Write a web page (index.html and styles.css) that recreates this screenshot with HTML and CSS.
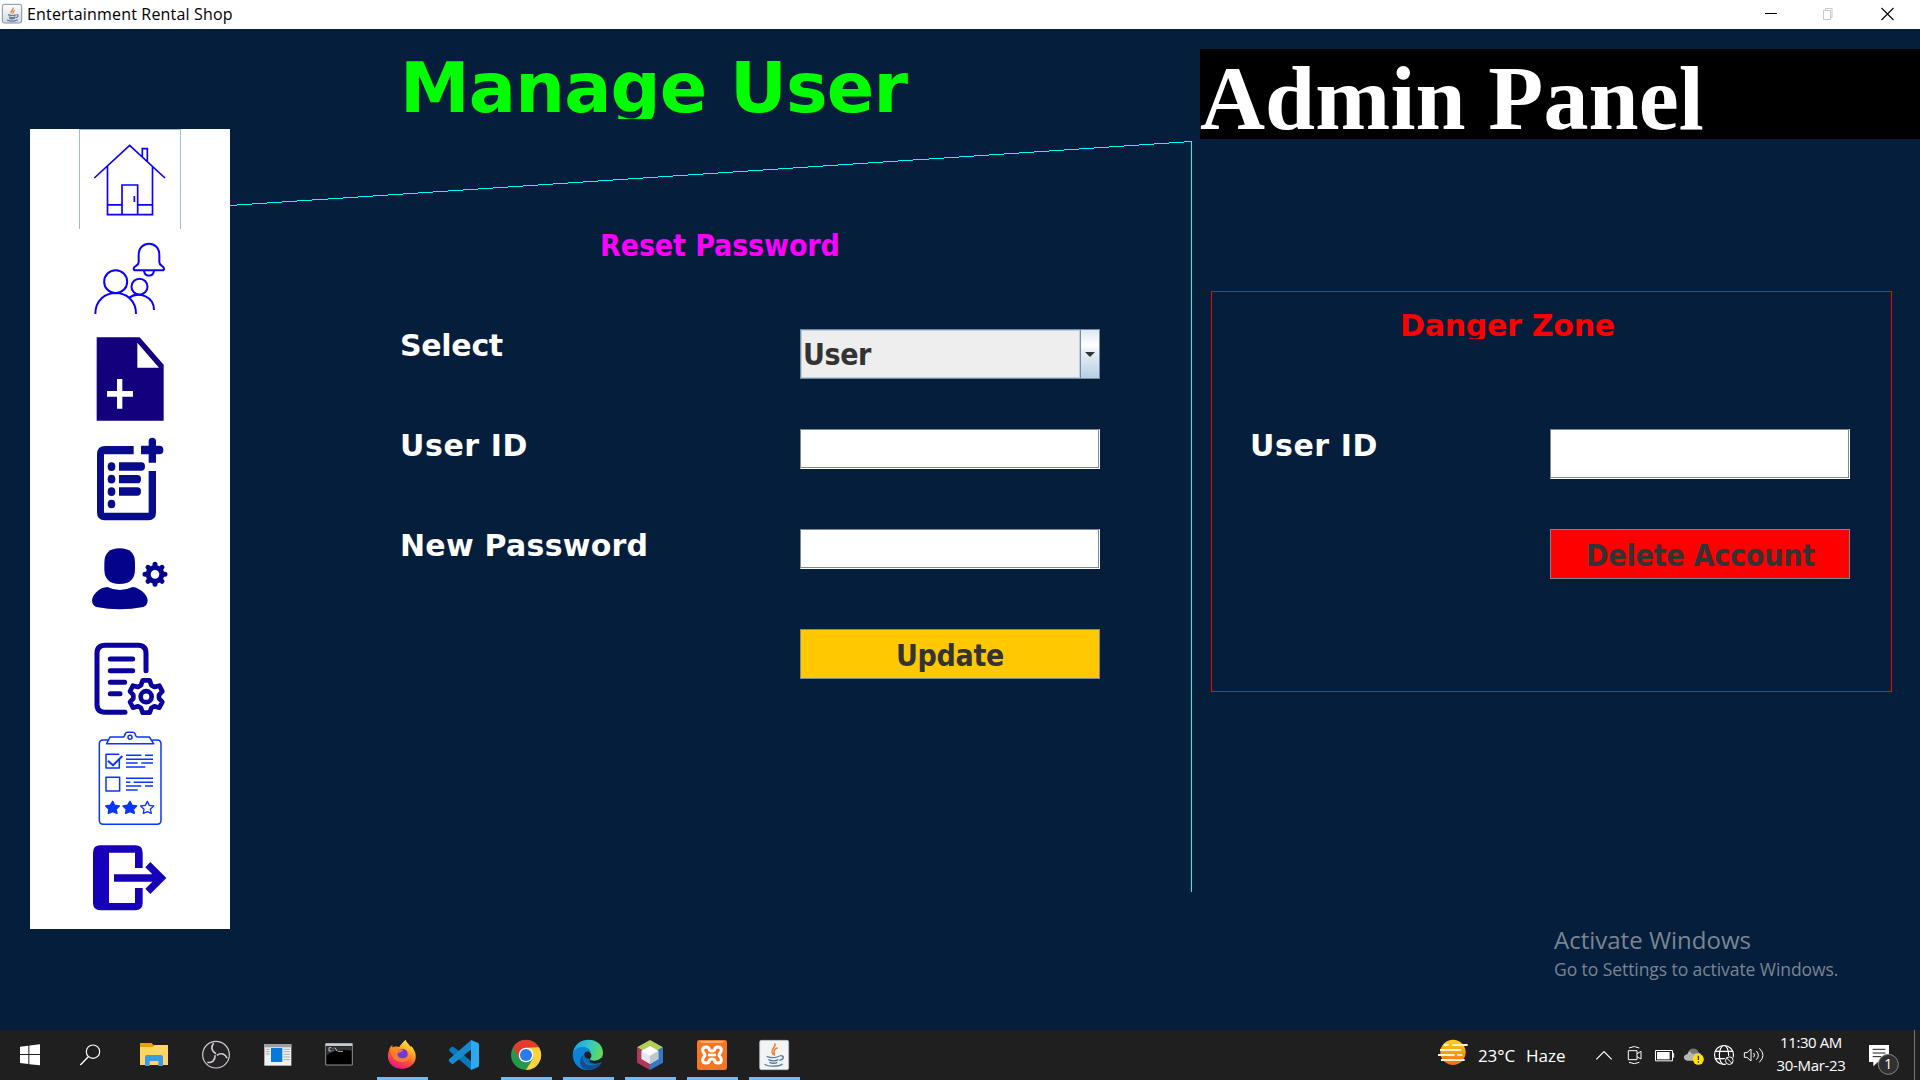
FILE: index.html
```html
<!DOCTYPE html>
<html lang="en">
<head>
<meta charset="utf-8">
<title>Entertainment Rental Shop</title>
<link rel="stylesheet" href="styles.css">
</head>
<body>
<header class="titlebar">
  <svg class="app-icon" viewBox="0 0 66 66">
    <defs><linearGradient id="javaBg" x1="0" y1="0" x2="0" y2="1"><stop offset="0" stop-color="#fdfdfd"/><stop offset="1" stop-color="#d5d9dd"/></linearGradient></defs>
    <rect x="4" y="4" width="58" height="56" rx="6" fill="url(#javaBg)" stroke="#7b93a8" stroke-width="3"/>
    <path d="M36 14c4 6-9 8-5 17M41 22c-7 4-5 7-5 10" fill="none" stroke="#e8833a" stroke-width="4"/>
    <path d="M21 35c8 3 18 3 25 0M24 41c6 3 14 3 19 0M25 46c6 2 12 2 17 0M18 51c10 4 24 4 32-1M47 35c7 0 5 8-3 9" fill="none" stroke="#5c7d9c" stroke-width="3.500"/>
  </svg>
  <span class="titlebar-text">Entertainment Rental Shop</span>
  <div class="window-controls">
    <svg viewBox="0 0 58 29"><path d="M23 13.500h12" stroke="#000"/></svg>
    <svg viewBox="0 0 58 29"><path d="M23.500 10.500h7v9h-7zM25.500 10v-1.500h6.500v9h-1.500" fill="none" stroke="#c9c9c9"/></svg>
    <svg viewBox="0 0 58 29"><path d="M23.500 8l12 12M35.500 8l-12 12" stroke="#000" stroke-width="1.100"/></svg>
  </div>
</header>

<main class="workspace">
  <nav class="sidebar">
    <button class="nav-item nav-home" aria-label="Home">
      <svg viewBox="180 27 300 300" fill="none" stroke="#0a00ff" stroke-width="5">
        <path d="M223 171L329 73l106 98M262.500 136v145h135V136M262 251.500h44M353 251.500h44M306 281v-89h47v89M343 225v18M367 107V83h15v38"/>
      </svg>
    </button>
    <button class="nav-item" aria-label="User alerts">
      <svg viewBox="180 327 300 300" fill="none" stroke="#0a00ff" stroke-width="6">
        <circle cx="287" cy="485" r="34.500"/><path d="M226 582c0-84 122-84 122 0M328 533c27-20 74-4 74 37"/>
        <circle cx="358.500" cy="500" r="24"/>
        <path d="M356 405c0-45 62-45 62 0v22c0 11 14 10 14 19 0 3-2 5-5 5h-80c-4 0-6-3-6-5 0-9 15-8 15-19zM372 452c2 20 28 20 30 0"/>
      </svg>
    </button>
    <button class="nav-item" aria-label="Add file">
      <svg viewBox="180 627 300 300" fill="#13007c">
        <path d="M230 652h129l72 82v168H230z"/><path d="M352 668v75h65zM291 777h16v36h32v17h-32v36h-16v-36h-30v-17h30z" fill="#fff"/>
      </svg>
    </button>
    <button class="nav-item" aria-label="Add list">
      <svg viewBox="180 927 300 300" fill="#080c8c">
        <path d="M341 978v25h-89v175h134V1053h22v124q0 24-23 24H254q-23 0-23-24V1003q0-25 25-25z"/>
        <path d="M386 977v-13q0-11 11-11t11 11v13h10q12 0 12 13t-12 13h-10v25h-22v-25h-23v-26zM297 1027h67q11 0 11 12.500t-11 12.500h-67zM297 1065h55q11 0 11 12.500t-11 12.500h-55zM297 1102h55q11 0 11 12.500t-11 12.500h-55z"/>
        <ellipse cx="274.500" cy="1040" rx="11.500" ry="13"/><ellipse cx="274.500" cy="1077.500" rx="11.500" ry="13"/><ellipse cx="274.500" cy="1115" rx="11.500" ry="13"/><ellipse cx="274.500" cy="1152" rx="11.500" ry="13"/>
      </svg>
    </button>
    <button class="nav-item" aria-label="Manage user">
      <svg viewBox="180 27 300 300" fill="#03038c">
        <path d="M253 129q0-44 46-44t46 44v18q0 45-46 45t-46-45z"/>
        <path d="M262 201q37 18 76 0c23 2 45 25 45 40 0 11-5 17-13 20q-71 14-141 0c-8-3-13-9-13-20 2-19 23-39 46-40z"/>
        <circle cx="405" cy="163" r="20.500" fill="none" stroke="#03038c" stroke-width="15"/>
        <path fill="none" stroke="#03038c" stroke-width="15" stroke-linecap="round" d="M405 133v3M405 190v3M375 163h3M432 163h3M384 142l2 2M424 182l2 2M426 142l-2 2M386 182l-2 2"/>
      </svg>
    </button>
    <button class="nav-item" aria-label="Manage records">
      <svg viewBox="180 327 300 300" fill="none" stroke="#0a009c" stroke-width="15" stroke-linecap="round" stroke-linejoin="round">
        <path d="M378 452v-52q0-24-24-24h-98q-25 0-25 24v153q0 24 25 24h59M271 417h67M271 452h67M271 487h43M271 521h29"/>
        <circle cx="378.500" cy="530" r="16.500" stroke-width="14"/>
        <path stroke-width="14" d="M368 481h21l5 15 9 5 15-4 9 17-10 11v10l10 11-9 17-15-4-9 5-5 14h-21l-5-14-9-5-15 4-9-17 10-11v-10l-10-11 9-17 15 4 9-5z"/>
      </svg>
    </button>
    <button class="nav-item" aria-label="Reviews">
      <svg viewBox="180 627 300 300" fill="none" stroke="#0a35ff" stroke-width="4.500" stroke-linejoin="round">
        <path d="M264 660h-14q-12 0-12 12v229q0 12 12 12h161q12 0 12-12V672q0-12-12-12h-14M260 671l10-20h38q5 0 8-10 2-4 6-4h16q4 0 7 4 2 10 8 10h35l13 20z"/>
        <circle cx="330" cy="652" r="6"/>
        <path d="M298 718v26h-40v-41h40M258 772h41v41h-41z"/><path d="M264 722l15 14 28-28" stroke-width="6"/>
        <path d="M318 706h46M375 706h24M318 718h81M318 729h35M364 729h35M318 741h58M318 775h81M318 787h13M341 787h58M318 798h46M375 798h24M318 810h35"/>
        <path fill="#0a35ff" d="M278 844l6 12 14 2-10 10 3 12-13-5-13 5 2-12-10-10 14-2zM330 844l6 12 14 2-10 10 3 12-13-5-13 5 2-12-10-10 14-2z"/>
        <path stroke-width="4" d="M382 844l6 12 13 2-10 10 3 12-12-5-12 5 2-12-10-10 14-2z"/>
      </svg>
    </button>
    <button class="nav-item" aria-label="Log out">
      <svg viewBox="180 927 300 300" fill="#1600b8">
        <path d="M241 976h105q22 0 22 22v46h-23v-46h-78v151h78v-45h23v45q0 22-22 22H241q-22 0-22-22V998q0-22 22-22z"/>
        <path d="M282 1063h115l-21-21 15-16 48 48-48 48-15-16 21-21H282z"/>
      </svg>
    </button>
  </nav>

  <section class="reset-section">
    <svg class="divider-line" viewBox="0 0 962 752"><path d="M0 64.500L961.500 0.500V751" fill="none" stroke="#00ffff" shape-rendering="crispEdges"/></svg>
    <h1 class="page-title">Manage User</h1>
    <h2 class="reset-title">Reset Password</h2>
    <div class="form-grid reset-form">
      <label class="field-label label-select">Select</label>
      <div class="combo"><span class="combo-value">User</span><span class="combo-arrow"><svg viewBox="0 0 10 5"><path d="M0 0h10L5 5z" fill="#333"/></svg></span></div>
      <label class="field-label label-id" for="uid">User ID</label>
      <input class="text-field" id="uid">
      <label class="field-label label-password" for="pwd">New Password</label>
      <input class="text-field" id="pwd" type="password">
      <button class="action update">Update</button>
    </div>
  </section>

  <section class="admin-section">
    <h2 class="admin-banner">Admin Panel</h2>
    <div class="danger-zone">
      <h3 class="danger-title">Danger Zone</h3>
      <div class="form-grid danger-form">
        <label class="field-label label-id" for="did">User ID</label>
        <input class="text-field tall" id="did">
        <button class="action delete">Delete Account</button>
      </div>
    </div>
    <div class="watermark">
      <p class="watermark-title">Activate Windows</p>
      <p class="watermark-text">Go to Settings to activate Windows.</p>
    </div>
  </section>
</main>

<footer class="taskbar">
  <div class="start"><svg viewBox="0 30 180 150"><path fill="#fff" d="M60 80l25-3v25H60zM88 76.500l32-3.500v29H88zM60 105h25v27l-25-3zM88 105h32v31l-32-3.500z"/></svg></div>
  <div class="search"><svg viewBox="180 30 189 150"><circle cx="279" cy="95" r="20" fill="none" stroke="#fff" stroke-width="3.500"/><path d="M265 110l-24 25" stroke="#fff" stroke-width="4"/></svg></div>
  <div class="app"><svg viewBox="369 30 186 150"><path d="M420 69h35l6 7h42v59h-83z" fill="#e8a200"/><path d="M420 81h38l6-6h40v60h-84z" fill="#ffd567"/><path d="M435 138v-27q0-6 6-6h42q6 0 6 6v27h-14v-15h-26v15z" fill="#3f9be0"/></svg></div>
  <div class="app"><svg viewBox="555 30 186 150"><circle cx="648" cy="104" r="40" fill="#252326" stroke="#d0d0d0" stroke-width="3.500"/><g fill="none" stroke="#d0d0d0" stroke-width="5"><path d="M648 101c-14-8-16-20-7-31"/><path d="M648 101c-14-8-16-20-7-31" transform="rotate(120 648 104)"/><path d="M648 101c-14-8-16-20-7-31" transform="rotate(240 648 104)"/></g></svg></div>
  <div class="app"><svg viewBox="741 30 186 150"><path d="M793 72h81v65h-81z" fill="#f1f1f1"/><path d="M793 72h81v10h-81z" fill="#9a9ea3"/><path d="M813 84h34v42h-34z" fill="#0a78d6"/><path d="M797 88h12M797 95h12M797 102h12M850 88h20M850 95h20M850 103h20M850 111h20M850 119h20" stroke="#aaa" stroke-width="3"/></svg></div>
  <div class="app"><svg viewBox="927 30 186 150"><path d="M977 71h80v64h-80z" fill="#000" stroke="#8d9299" stroke-width="3"/><path d="M979 79v28q25-22 77-15V79z" fill="#333"/><path d="M977 70h80v8h-80z" fill="#c3cbd2"/><path d="M994 83h-7v10h7M999 84v2M999 91v2M1005 83l7 11M1014 94h15" fill="none" stroke="#ddd" stroke-width="2.500"/></svg></div>
  <div class="app running"><svg viewBox="3 30 186 150">
    <defs><linearGradient id="fox" x1=".8" y1="0" x2=".3" y2="1"><stop offset="0" stop-color="#fff04b"/><stop offset=".35" stop-color="#ffae22"/><stop offset=".65" stop-color="#ff5038"/><stop offset="1" stop-color="#e7147f"/></linearGradient></defs>
    <path d="M57 91c2-8 5-13 10-16v8c7-4 14-5 21-2 5-9 11-15 19-22 3 10 11 13 14 21 3-2 5 0 5 0 26 35 4 66-31 66-35 0-48-29-38-55z" fill="url(#fox)"/><circle cx="97" cy="103" r="17" fill="#7139db"/><path d="M61 84c12-4 20-7 28 3l11 2c-3 8-13 9-17 10-2 10 5 17 16 15 12 0 18-9 11-19 19 13 5 31-13 31-25 0-37-20-36-42z" fill="#ff8a22" opacity=".8"/></svg></div>
  <div class="app"><svg viewBox="189 30 186 150"><path d="M303 61v88l-64-55q-4-4 0-8l6-5q3-2 7 1l51 39z" fill="#0878be"/><path d="M303 61v29l-53 41q-4 2-7-1l-5-5q-4-4 0-8z" fill="#1689cf"/><path d="M303 60l20 8q4 2 4 6v62q0 4-4 6l-20 8z" fill="#29aaf4"/><path d="M303 89v34l-21-17z" fill="#1f1f1f"/></svg></div>
  <div class="app running"><svg viewBox="375 30 186 150"><circle cx="468" cy="105" r="45" fill="#24984b"/><path d="M429 82a45 45 0 0 1 78 0l-39 1-20 33z" fill="#e33b2e"/><path d="M507 82a45 45 0 0 1-39 68l20-33-20-34z" fill="#ffd13d"/><circle cx="468" cy="105" r="22" fill="#fff"/><circle cx="468" cy="105" r="18" fill="#287bea"/></svg></div>
  <div class="app running"><svg viewBox="561 30 186 150">
    <defs><linearGradient id="edge" x1="0" y1=".3" x2="1" y2=".5"><stop offset="0" stop-color="#219ddd"/><stop offset=".5" stop-color="#31c6cc"/><stop offset="1" stop-color="#62dd50"/></linearGradient></defs>
    <circle cx="653" cy="105" r="45" fill="#0e68b8"/><path d="M659 127q24 10 42-5v-8h-42z" fill="#1f1f1f"/><path d="M609 105c0-60 90-60 90-6 0 24-34 28-40 18 13-14-5-33-25-29-13 2-21 9-25 17z" fill="url(#edge)"/><path d="M609 104c0-26 47-32 54-7-20-11-30 15-16 29 12 11 28 11 45 1-9 14-22 23-39 23-25 0-44-20-44-46z" fill="#0b83d8"/><path d="M641 104c-10 23 17 42 48 25l7-2c-8 17-28 24-43 23-27-4-29-34-12-46z" fill="#114f91"/><path d="M659 117c-15 0-18-10-14-20 15-10 26 11 14 20z" fill="#1f1f1f"/></svg></div>
  <div class="app running"><svg viewBox="747 30 186 150"><path d="M840 60l39 22-39 23-39-23z" fill="#b1cf57"/><path d="M801 82l39 23v45l-39-22z" fill="#b23857"/><path d="M879 82l-39 23v45l39-22z" fill="#3579c4"/><path d="M840 79l25 14v24l-25 15-26-15V93z" fill="#e4e7eb"/><path d="M840 79l25 14-25 14-26-14z" fill="#fff"/><path d="M840 107l25-14v24l-25 15z" fill="#bfc7ce"/></svg></div>
  <div class="app running"><svg viewBox="933 30 186 150"><rect x="981" y="60" width="90" height="90" rx="7" fill="#f37622"/><path d="M990 63h72q-1 6-8 6h-56q-7 0-8-6z" fill="#f8ad79"/><path d="M1018 90c0-12-20-12-20 0 0 7 6 10 7 15-1 5-7 8-7 15 0 12 20 12 20 0q8-6 16 0c0 12 20 12 20 0 0-7-6-10-7-15 1-5 7-8 7-15 0-12-20-12-20 0q-8 6-16 0z" fill="none" stroke="#fff" stroke-width="9" stroke-linejoin="round"/><path d="M1014 105h24" stroke="#fff" stroke-width="8"/></svg></div>
  <div class="app running"><svg viewBox="1119 30 186 150"><rect x="1169" y="61" width="87" height="88" rx="5" fill="#f2f4f5" stroke="#b9c3cb" stroke-width="2"/><path d="M1214 70c8 12-18 16-4 34M1223 83c-17 9-9 12-10 24" fill="none" stroke="#ef7b28" stroke-width="4.500"/><path d="M1190 109c13 5 29 4 39-1M1195 119c9 4 22 4 30 0M1198 127c7 3 18 3 24 0M1184 132c5 9 46 8 53 0M1230 107c15-1 12 11-2 14" fill="none" stroke="#557a9c" stroke-width="4"/></svg></div>

  <div class="tray">
    <div class="weather">
      <svg viewBox="102 30 114 150"><defs><linearGradient id="sun" x1="0" y1="0" x2="0" y2="1"><stop offset="0" stop-color="#ffd21c"/><stop offset="1" stop-color="#f56a0c"/></linearGradient></defs><circle cx="159" cy="97" r="38" fill="url(#sun)"/><path d="M131 75h15M156 75h47M120 90h64M114 105h50M172 105h15M123 120h71" stroke="#fff1d0" stroke-width="5.500"/></svg>
      <span class="temperature">23°C</span><span class="condition">Haze</span>
    </div>
    <svg class="tray-icon w30" viewBox="570 30 90 150"><path d="M589 118l23-23 23 23" fill="none" stroke="#fff" stroke-width="3.500"/></svg>
    <svg class="tray-icon w29" viewBox="660 30 87 150"><path d="M685 92h26v27h-26zM711 101l12-7v23l-12-7M687 84q16-9 31 0M687 127q16 8 31 0" fill="none" stroke="#fff" stroke-width="3"/></svg>
    <svg class="tray-icon w31" viewBox="747 30 93 150"><path d="M766.500 91.500h51v31h-51zM818 100h3v12h-3" fill="none" stroke="#fff" stroke-width="3"/><path d="M771 96h38v22h-38z" fill="#fff"/></svg>
    <svg class="tray-icon w29" viewBox="840 30 87 150"><path d="M861 122c-14-2-11-19 1-19 5-18 27-22 34-5 12 1 13 24 0 24z" fill="#b6b6b6"/><path d="M867 92c8-11 25-8 29 6l-18 4z" fill="#777"/><circle cx="895" cy="118" r="16.500" fill="#ffe100"/><path d="M895 107v13M895 124v4" stroke="#222" stroke-width="3.500"/></svg>
    <svg class="tray-icon w31" viewBox="927 30 93 150"><g fill="none" stroke="#fff" stroke-width="3.500"><circle cx="972" cy="105" r="28.500"/><ellipse cx="972" cy="105" rx="14" ry="28.500"/><path d="M945 94h54M945 116h54"/></g><circle cx="988" cy="122" r="15" fill="#1f1f1f"/><circle cx="988" cy="122" r="11.500" fill="none" stroke="#fff" stroke-width="3"/><path d="M980 114l16 16" stroke="#fff" stroke-width="3"/></svg>
    <svg class="tray-icon w30" viewBox="1020 30 90 150"><path d="M1033 98h8l12-11v36l-12-11h-8zM1061 99q5 6 0 13M1069 93q12 13 0 26M1078 85q22 21 0 42" fill="none" stroke="#fff" stroke-width="3"/></svg>
    <div class="clock"><span class="time">11:30 AM</span><span class="date">30-Mar-23</span></div>
    <svg class="tray-icon w61" viewBox="1359 30 183 150"><path d="M1407 75h60v51h-33l-14 13v-13h-13z" fill="#fff"/><path d="M1418 88h38M1418 99h38M1418 110h26" stroke="#1f1f1f" stroke-width="3"/><circle cx="1465" cy="133" r="30" fill="#303030" stroke="#858585" stroke-width="3"/><text class="badge-count" x="1465" y="148" text-anchor="middle">1</text></svg>
  </div>
</footer>
</body>
</html>
```
FILE: styles.css
```css
* { box-sizing: border-box; }

body {
  margin: 0;
  width: 1920px;
  height: 1080px;
  overflow: hidden;
  display: flex;
  flex-direction: column;
  background: #051e3c;
  color: #fff;
  font-family: "Open Sans", "Noto Sans", sans-serif;
}

h1, h2, h3, p { margin: 0; white-space: nowrap; }
button, input { margin: 0; font: inherit; border-radius: 0; }
svg { display: block; }

/* Window title bar */
.titlebar {
  height: 29px;
  flex: none;
  display: flex;
  align-items: center;
  background: #fff;
  color: #000;
}
.app-icon { width: 22px; height: 22px; margin: 0 4px 2px 1px; }
.titlebar-text { font-size: 16px; line-height: 29px; letter-spacing: 0.18px; }
.window-controls { margin-left: auto; display: flex; margin-right: 4px; }
.window-controls svg { width: 58px; height: 29px; }

/* Application area */
.workspace {
  height: 1001px;
  flex: none;
  display: flex;
  align-items: flex-start;
  font-family: "DejaVu Sans", sans-serif;
  font-weight: 700;
}

.sidebar {
  width: 200px;
  height: 800px;
  margin: 100px 0 0 30px;
  display: flex;
  flex-direction: column;
  align-items: center;
  background: #fff;
}
.nav-item {
  width: 102px;
  height: 100px;
  padding: 0;
  border: 0;
  background: none;
  display: flex;
  justify-content: center;
}
.nav-item svg { width: 100px; height: 100px; flex: none; }
.nav-home { border: 1px solid #a3b8cc; border-bottom: 0; }
.nav-home svg { margin-top: 0; }

.reset-section {
  width: 962px;
  height: 1001px;
  padding: 20px 0 0 170px;
  position: relative;
}
.divider-line {
  position: absolute;
  left: 0;
  top: 112px;
  width: 962px;
  height: 752px;
}
.page-title {
  height: 70px;
  padding-top: 4px;
  overflow: hidden;
  font-size: 70px;
  line-height: 70px;
  letter-spacing: -0.85px;
  color: #0f0;
}
.reset-title {
  margin: 110px 0 67px 200px;
  font: 700 30px/33px "DejaVu Sans Condensed", "DejaVu Sans", sans-serif;
  font-stretch: condensed;
  letter-spacing: -0.1px;
  color: #f0f;
}

.form-grid {
  display: grid;
  grid-auto-rows: 100px;
  align-items: start;
}
.reset-form { grid-template-columns: 400px 300px; }
.danger-form { grid-template-columns: 300px 300px; padding-left: 38px; }

.field-label { font-size: 30px; line-height: 33px; white-space: nowrap; }
.label-select { letter-spacing: -0.3px; }
.label-id { letter-spacing: 0.6px; }
.label-password { letter-spacing: 0.25px; }

.text-field {
  width: 300px;
  height: 40px;
  padding: 0 4px;
  background: #fff;
  border: 1px solid;
  border-color: #7a8a99 #fff #fff #7a8a99;
  box-shadow: inset -1px -1px #7a8a99;
}
.text-field.tall { height: 50px; }

.combo {
  height: 50px;
  display: flex;
  border: 1px solid #7a8a99;
  background: #eee;
  color: #333;
  font-family: "DejaVu Sans Condensed", "DejaVu Sans", sans-serif;
  font-stretch: condensed;
  font-size: 30px;
  line-height: 48px;
}
.combo-value {
  flex: 1;
  padding-left: 1px;
  line-height: 47px;
  letter-spacing: -0.4px;
  border: 1px solid #b8cfe5;
}
.combo-arrow {
  width: 19px;
  border-left: 1px solid #7a8a99;
  background: linear-gradient(#dde8f3, #fff 32%, #e8eff7 45%, #b8cfe5);
  display: flex;
  align-items: center;
  justify-content: center;
}
.combo-arrow svg { width: 10px; height: 5px; }

.action {
  grid-column: 2;
  height: 50px;
  padding: 3px 0 0;
  border: 1px solid #7a8a99;
  color: #333;
  font-family: "DejaVu Sans Condensed", "DejaVu Sans", sans-serif;
  font-stretch: condensed;
  font-size: 30px;
  line-height: 44px;
}
.update { background: #ffc800; letter-spacing: -0.3px; }
.delete { background: #f00; letter-spacing: -0.2px; padding-left: 1px; }

.admin-section { width: 728px; padding-top: 20px; }
.admin-banner {
  height: 90px;
  margin-left: 8px;
  padding-top: 5px;
  background: #000;
  font: 700 90px/90px "Liberation Serif", serif;
  letter-spacing: 0.12px;
}
.danger-zone {
  width: 681px;
  height: 401px;
  margin: 152px 0 0 19px;
  padding-top: 17px;
  border: 1px solid #f00;
}
.danger-title {
  height: 30px;
  margin: 0 0 90px 188px;
  overflow: hidden;
  font-size: 30px;
  line-height: 33px;
  letter-spacing: -0.25px;
  color: #f00;
}

.watermark {
  margin: 230px 0 0 362px;
  font-family: "Open Sans", "Noto Sans", sans-serif;
  font-weight: 400;
  color: #7b8591;
}
.watermark-title { font-size: 24px; line-height: 36px; }
.watermark-text { font-size: 17.5px; line-height: 22px; letter-spacing: -0.07px; }

/* Taskbar */
.taskbar {
  height: 50px;
  flex: none;
  display: flex;
  background: #1f1f1f;
  overflow: hidden;
}
.taskbar svg { height: 50px; flex: none; }
.start, .start svg { width: 60px; }
.search, .search svg { width: 63px; }
.app { width: 62px; height: 50px; display: flex; flex-direction: column; align-items: center; }
.app svg { width: 62px; }
.running::after {
  content: "";
  width: 51px;
  height: 3px;
  margin-top: -3px;
  flex: none;
  background: #76b9ed;
}

.tray {
  margin-left: auto;
  display: flex;
  margin-right: 5px;
  border-right: 1px solid #777;
}
.weather { width: 156px; display: flex; font-size: 17px; line-height: 51px; }
.weather svg { width: 38px; }
.temperature { margin-left: 6px; width: 48px; letter-spacing: -0.1px; }
.condition { letter-spacing: 0; }
.w29 { width: 29px; }
.w30 { width: 30px; }
.w31 { width: 31px; }
.w61 { width: 61px; }
.clock {
  width: 83px;
  padding: 1px 1px 0 0;
  display: flex;
  flex-direction: column;
  align-items: center;
  font-size: 15px;
  line-height: 23px;
  white-space: nowrap;
}
.time { letter-spacing: -0.4px; }
.date { letter-spacing: -0.3px; }
.badge-count { font-size: 42px; fill: #fff; }
```
